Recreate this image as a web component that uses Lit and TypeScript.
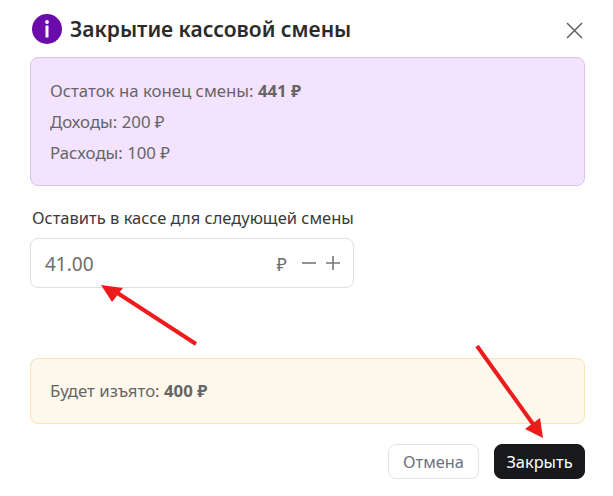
import { LitElement, html, css } from "lit";
import { customElement } from "lit/decorators.js";

@customElement("app-root")
export class AppRoot extends LitElement {
  static styles = css`
    :host {
      display: block;
      position: relative;
      width: 613px;
      height: 496px;
      background: #fff;
      font-family: "Noto Sans", "Open Sans", sans-serif;
      color: #666;
      overflow: hidden;
    }
    .dialog {
      box-sizing: border-box;
      height: 496px;
      padding: 14px 28px 17px 30px;
      display: flex;
      flex-direction: column;
    }
    .header {
      display: flex;
      align-items: center;
      height: 30px;
      margin-left: 2px;
      gap: 8px;
    }
    .title {
      font-size: 21px;
      font-weight: 600;
      color: #2b2b2b;
      flex: 1;
      white-space: nowrap;
    }
    .close {
      display: block;
      margin: 2px 2px 0 0;
    }
    .box {
      box-sizing: border-box;
      border-radius: 8px;
      border: 1px solid;
      font-size: 16.8px;
      padding-left: 19px;
    }
    .info {
      margin-top: 13px;
      height: 129px;
      background: #f3e3fe;
      border-color: #dcc3ec;
      padding-top: 22px;
      display: flex;
      flex-direction: column;
      gap: 9px;
    }
    .line {
      line-height: 22px;
      white-space: nowrap;
    }
    b {
      font-weight: 700;
    }
    .label {
      margin: 21px 0 0 2px;
      font-size: 16.5px;
      line-height: 22px;
      color: #3a3a3a;
      white-space: nowrap;
    }
    .input {
      box-sizing: border-box;
      margin-top: 9px;
      width: 324px;
      height: 50px;
      border: 1px solid #dfdfdf;
      border-radius: 8px;
      display: flex;
      align-items: center;
      padding: 0 13px 0 14px;
      font-size: 19px;
      color: #6e6e6e;
    }
    .value {
      flex: 1;
      padding-top: 2px;
    }
    .unit {
      font-size: 18px;
      margin-right: 15px;
      padding-top: 2px;
    }
    .steps {
      display: flex;
      gap: 10px;
    }
    .steps svg {
      display: block;
    }
    .warn {
      margin-top: 70px;
      height: 66px;
      background: #fff8ed;
      border-color: #fbe3ad;
      display: flex;
      align-items: center;
    }
    .actions {
      margin-top: 20px;
      display: flex;
      justify-content: flex-end;
      gap: 15px;
    }
    .btn {
      box-sizing: border-box;
      width: 91px;
      height: 35px;
      border-radius: 8px;
      font: inherit;
      font-size: 16.4px;
      padding: 0;
      border: 1px solid #e2e2e2;
      background: #fff;
      color: #6b7280;
    }
    .primary {
      background: #19191b;
      border-color: #19191b;
      color: #fff;
    }
    .arrows {
      position: absolute;
      left: 0;
      top: 0;
      pointer-events: none;
    }
  `;

  render() {
    return html`
      <div class="dialog">
        <div class="header">
          <svg width="30" height="30" viewBox="0 0 30 30">
            <circle cx="15" cy="15" r="15" fill="#6c0bab" />
            <circle cx="15" cy="8" r="1.9" fill="#fff" />
            <rect x="13.5" y="11.5" width="3" height="12" rx="0.5" fill="#fff" />
          </svg>
          <div class="title">Закрытие кассовой смены</div>
          <svg class="close" width="17" height="17" viewBox="0 0 17 17">
            <path d="M1 1 L16 16 M16 1 L1 16" stroke="#666" stroke-width="1.6" fill="none" />
          </svg>
        </div>
        <div class="box info">
          <div class="line">Остаток на конец смены: <b>441 ₽</b></div>
          <div class="line">Доходы: 200 ₽</div>
          <div class="line">Расходы: 100 ₽</div>
        </div>
        <div class="label">Оставить в кассе для следующей смены</div>
        <div class="input">
          <span class="value">41.00</span>
          <span class="unit">₽</span>
          <div class="steps">
            <svg width="14" height="14" viewBox="0 0 14 14">
              <path d="M0 7 H14" stroke="#777" stroke-width="1.6" />
            </svg>
            <svg width="14" height="14" viewBox="0 0 14 14">
              <path d="M0 7 H14 M7 0 V14" stroke="#777" stroke-width="1.6" />
            </svg>
          </div>
        </div>
        <div class="box warn">
          <div class="line">Будет изъято: <b>400 ₽</b></div>
        </div>
        <div class="actions">
          <button class="btn">Отмена</button>
          <button class="btn primary">Закрыть</button>
        </div>
      </div>
      <svg class="arrows" width="613" height="496" viewBox="0 0 613 496">
        <path d="M196 344 L116 292" stroke="#ec1c1c" stroke-width="4" fill="none" />
        <path d="M101 285 L123 288 L112 302 Z" fill="#ec1c1c" />
        <path d="M477 346 L533 424" stroke="#ec1c1c" stroke-width="4" fill="none" />
        <path d="M543 438 L525 429 L540 418 Z" fill="#ec1c1c" />
      </svg>
    `;
  }
}
